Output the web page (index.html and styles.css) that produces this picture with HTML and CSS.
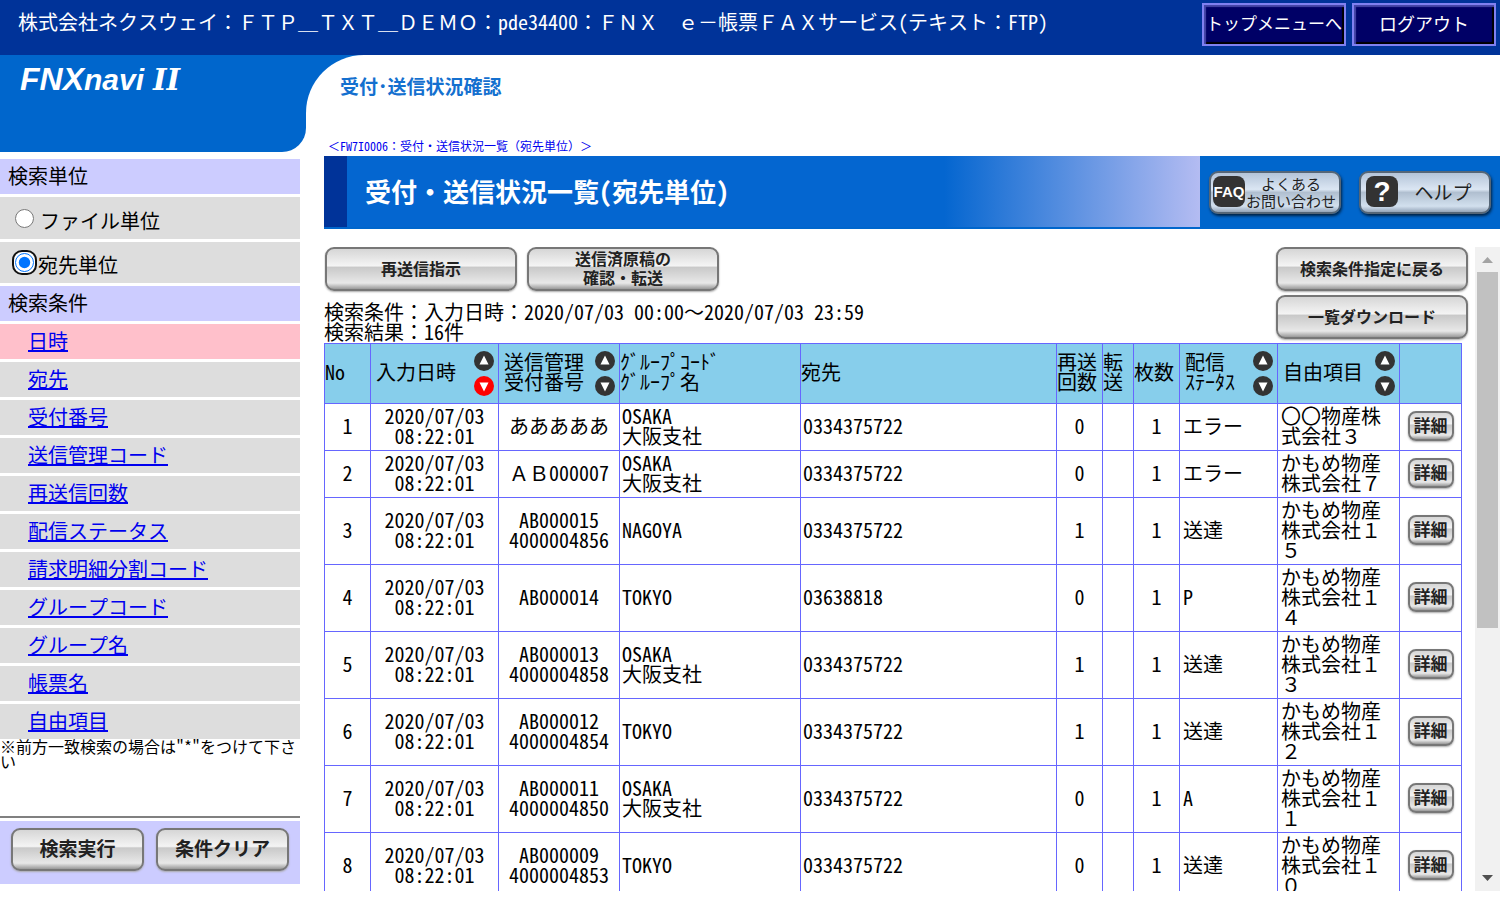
FILE: index.html
```html
<!DOCTYPE html>
<html lang="ja">
<head>
<meta charset="utf-8">
<title>受付・送信状況一覧</title>
<link rel="stylesheet" href="styles.css">
</head>
<body>
<svg class="defs" width="0" height="0" aria-hidden="true">
  <symbol id="up" viewBox="0 0 20 20"><circle cx="10" cy="10" r="10" fill="currentColor"/><path d="M10 4.5L14.5 13.5H5.5z" fill="#fff"/></symbol>
  <symbol id="down" viewBox="0 0 20 20"><circle cx="10" cy="10" r="10" fill="currentColor"/><path d="M10 15.5L14.5 6.5H5.5z" fill="#fff"/></symbol>
</svg>
<div class="page">
  <header class="topbar">
    <span class="company">株式会社ネクスウェイ：ＦＴＰ＿ＴＸＴ＿ＤＥＭＯ：pde34400：ＦＮＸ　ｅ－帳票ＦＡＸサービス(テキスト：FTP)</span>
    <nav class="topnav">
      <button class="navy">トップメニューへ</button>
      <button class="navy navy-wide">ログアウト</button>
    </nav>
  </header>
  <div class="frames">
    <aside class="side">
      <div class="brand"><span class="fnx">FNX</span><span class="navi">navi</span><span class="two">II</span></div>
      <h2 class="bar">検索単位</h2>
      <label class="choice"><input type="radio" name="unit"><span>ファイル単位</span></label>
      <label class="choice chosen"><span class="ring"><input type="radio" name="unit" checked></span><span>宛先単位</span></label>
      <h2 class="bar">検索条件</h2>
      <ul class="menu">
        <li class="current"><a href="#">日時</a></li>
        <li><a href="#">宛先</a></li>
        <li><a href="#">受付番号</a></li>
        <li><a href="#">送信管理コード</a></li>
        <li><a href="#">再送信回数</a></li>
        <li><a href="#">配信ステータス</a></li>
        <li><a href="#">請求明細分割コード</a></li>
        <li><a href="#">グループコード</a></li>
        <li><a href="#">グループ名</a></li>
        <li><a href="#">帳票名</a></li>
        <li><a href="#">自由項目</a></li>
      </ul>
      <p class="note">※前方一致検索の場合は"*"をつけて下さい</p>
      <div class="actions">
        <button class="silver large">検索実行</button>
        <button class="silver large">条件クリア</button>
      </div>
    </aside>
    <main class="main">
      <div class="corner"><h1 class="section">受付･送信状況確認</h1></div>
      <div class="content">
        <p class="code">＜FW7I0006：受付・送信状況一覧（宛先単位）＞</p>
        <div class="titlebar">
          <h2 class="title">受付・送信状況一覧(宛先単位)</h2>
          <div class="help">
            <button class="silver blue faq"><b class="tag">FAQ</b><span>よくある<br>お問い合わせ</span></button>
            <button class="silver blue"><b class="tag mark">?</b><span class="helptext">ヘルプ</span></button>
          </div>
        </div>
        <div class="viewport">
          <div class="sheet">
            <div class="tools">
              <div class="left">
                <div class="pair">
                  <button class="silver">再送信指示</button>
                  <button class="silver">送信済原稿の<br>確認・転送</button>
                </div>
                <p class="summary">検索条件：入力日時：2020/07/03 00:00～2020/07/03 23:59<br>検索結果：16件</p>
              </div>
              <div class="right">
                <button class="silver">検索条件指定に戻る</button>
                <button class="silver">一覧ダウンロード</button>
              </div>
            </div>
            <table class="list">
              <colgroup><col class="c46"><col class="c128"><col class="c121"><col class="c181"><col><col class="c46"><col class="c31"><col class="c46"><col class="c98"><col class="c122"><col class="c62"></colgroup>
              <thead>
                <tr>
                  <th>No</th>
                  <th><div class="sort"><span>入力日時</span><span class="arrows"><svg><use href="#up"/></svg><svg class="red"><use href="#down"/></svg></span></div></th>
                  <th><div class="sort"><span>送信管理<br>受付番号</span><span class="arrows"><svg><use href="#up"/></svg><svg><use href="#down"/></svg></span></div></th>
                  <th>ｸﾞﾙｰﾌﾟｺｰﾄﾞ<br>ｸﾞﾙｰﾌﾟ名</th>
                  <th>宛先</th>
                  <th>再送<br>回数</th>
                  <th>転<br>送</th>
                  <th>枚数</th>
                  <th><div class="sort"><span>配信<br>ｽﾃｰﾀｽ</span><span class="arrows"><svg><use href="#up"/></svg><svg><use href="#down"/></svg></span></div></th>
                  <th><div class="sort"><span>自由項目</span><span class="arrows"><svg><use href="#up"/></svg><svg><use href="#down"/></svg></span></div></th>
                  <th></th>
                </tr>
              </thead>
              <tbody>
                <tr><td class="mid">1</td><td class="mid">2020/07/03<br>08:22:01</td><td class="mid">あああああ</td><td>OSAKA<br>大阪支社</td><td>0334375722</td><td class="mid">0</td><td></td><td class="mid">1</td><td>エラー</td><td>〇〇物産株式会社３</td><td class="mid"><button class="silver small">詳細</button></td></tr>
                <tr><td class="mid">2</td><td class="mid">2020/07/03<br>08:22:01</td><td class="mid">ＡＢ000007</td><td>OSAKA<br>大阪支社</td><td>0334375722</td><td class="mid">0</td><td></td><td class="mid">1</td><td>エラー</td><td>かもめ物産株式会社７</td><td class="mid"><button class="silver small">詳細</button></td></tr>
                <tr><td class="mid">3</td><td class="mid">2020/07/03<br>08:22:01</td><td class="mid">AB000015<br>4000004856</td><td>NAGOYA</td><td>0334375722</td><td class="mid">1</td><td></td><td class="mid">1</td><td>送達</td><td>かもめ物産株式会社１５</td><td class="mid"><button class="silver small">詳細</button></td></tr>
                <tr><td class="mid">4</td><td class="mid">2020/07/03<br>08:22:01</td><td class="mid">AB000014</td><td>TOKYO</td><td>03638818</td><td class="mid">0</td><td></td><td class="mid">1</td><td>P</td><td>かもめ物産株式会社１４</td><td class="mid"><button class="silver small">詳細</button></td></tr>
                <tr><td class="mid">5</td><td class="mid">2020/07/03<br>08:22:01</td><td class="mid">AB000013<br>4000004858</td><td>OSAKA<br>大阪支社</td><td>0334375722</td><td class="mid">1</td><td></td><td class="mid">1</td><td>送達</td><td>かもめ物産株式会社１３</td><td class="mid"><button class="silver small">詳細</button></td></tr>
                <tr><td class="mid">6</td><td class="mid">2020/07/03<br>08:22:01</td><td class="mid">AB000012<br>4000004854</td><td>TOKYO</td><td>0334375722</td><td class="mid">1</td><td></td><td class="mid">1</td><td>送達</td><td>かもめ物産株式会社１２</td><td class="mid"><button class="silver small">詳細</button></td></tr>
                <tr><td class="mid">7</td><td class="mid">2020/07/03<br>08:22:01</td><td class="mid">AB000011<br>4000004850</td><td>OSAKA<br>大阪支社</td><td>0334375722</td><td class="mid">0</td><td></td><td class="mid">1</td><td>A</td><td>かもめ物産株式会社１１</td><td class="mid"><button class="silver small">詳細</button></td></tr>
                <tr><td class="mid">8</td><td class="mid">2020/07/03<br>08:22:01</td><td class="mid">AB000009<br>4000004853</td><td>TOKYO</td><td>0334375722</td><td class="mid">0</td><td></td><td class="mid">1</td><td>送達</td><td>かもめ物産株式会社１０</td><td class="mid"><button class="silver small">詳細</button></td></tr>
              </tbody>
            </table>
          </div>
          <div class="scroll" aria-hidden="true">
            <svg class="cap" viewBox="0 0 25 25"><path d="M12.5 10L18 16H7z" fill="#a3a3a3"/></svg>
            <div class="track"><div class="thumb"></div></div>
            <svg class="cap" viewBox="0 0 25 25"><path d="M12.5 15L18 9H7z" fill="#505050"/></svg>
          </div>
        </div>
      </div>
    </main>
  </div>
</div>
</body>
</html>
```
FILE: styles.css
```css
* { box-sizing: border-box; }
body {
  margin: 0;
  background: #fff;
  color: #000;
  font: 300 20px/20px "Noto Sans Mono CJK JP", "Noto Sans CJK JP", monospace;
}
h1, h2, p, ul { margin: 0; padding: 0; font-weight: inherit; font-size: inherit; }
button { font-family: inherit; cursor: pointer; }
.defs { position: absolute; }
.page { display: flex; flex-direction: column; height: 100vh; padding: 0 7px 7px 0; overflow: hidden; }

.topbar { flex: none; display: flex; justify-content: space-between; height: 55px; padding: 3px 4px 0 18px; background: #003399; color: #fff; }
.company { padding-top: 9px; white-space: nowrap; }
.topnav { display: flex; gap: 6px; }
.navy {
  width: 144px; height: 43px; padding: 0 0 4px;
  border: 2px solid #8080f0; outline: 0; background: #000066; color: #fff;
  box-shadow: inset 2px 2px 1px #4646a8, inset -2px -2px 1px #000;
  font-size: 17px; font-weight: 500; white-space: nowrap; line-height: 20px;
  display: flex; align-items: center; justify-content: center;
}
.navy-wide { font-size: 18px; }

.frames { flex: 1; display: flex; min-height: 0; }
.side { flex: none; display: flex; flex-direction: column; width: 306px; padding-bottom: 7px; }
.side > * { margin-right: 6px; }
.side > .brand {
  flex: none; display: flex; align-items: baseline; height: 97px; margin: 0 0 7px; padding: 8px 0 0 20px;
  border-bottom-right-radius: 24px; background: #0066cc; color: #fff;
  font: italic bold 32px/32px "Liberation Sans", sans-serif;
}
.navi { font-size: 30px; }
.two { margin-left: 9px; font-family: "DejaVu Serif", serif; font-size: 29px; }
.bar { flex: none; height: 35px; padding: 7px 8px; margin-bottom: 3px; background: #ccccff; }
.choice { flex: none; display: flex; align-items: center; gap: 6px; height: 42px; margin-bottom: 3px; padding: 6px 0 0 15px; background: #dddddd; }
.choice input { display: block; width: 19px; height: 19px; margin: 0 0 6px; }
.chosen { gap: 1px; height: 41px; padding: 5px 0 0 12px; }
.ring { margin-bottom: 6px; border: 2px solid #111; border-radius: 10px; padding: 1px; background: #fff; }
.ring input { margin: 0; }
.menu { list-style: none; display: flex; flex-direction: column; gap: 3px; }
.menu li { height: 35px; padding: 7px 28px; background: #dddddd; }
.menu .current { background: #ffc0cb; }
.menu a { color: #0000ee; text-decoration-thickness: 2px; text-underline-offset: 1px; }
.note { font-size: 16px; line-height: 15px; }
.actions { flex: none; display: flex; gap: 12px; height: 68px; margin-top: auto; padding: 10px 11px; border-top: 2px solid #808080; background: linear-gradient(#fff 3px, #ccccff 3px); }

.silver {
  display: flex; align-items: center; justify-content: center; width: 192px; height: 44px; padding: 0 0 2px;
  border: 2px solid #777; border-radius: 9px; color: #222;
  background: linear-gradient(#d6d6d6, #f4f4f4 42%, #c9c9c9 46%, #e8e8e8 85%, #999);
  box-shadow: 0 1px 2px #aaa; font-size: 16px; font-weight: 700; line-height: 19px; white-space: nowrap;
}
.large { width: 133px; height: 43px; padding-bottom: 4px; font-size: 19px; }
.small { display: inline-flex; width: 46px; height: 30px; padding: 0 0 3px; border-radius: 8px; font-size: 17px; vertical-align: middle; }

.main { flex: 1; display: flex; flex-direction: column; min-width: 0; }
.corner { flex: none; height: 82px; background: linear-gradient(#0066cc, #0066cc) 0 0 / 60px 60px no-repeat; }
.section { height: 82px; padding: 21px 34px; border-top-left-radius: 58px; background: #fff; color: #1470cf; font-size: 19px; font-weight: 700; }
.content { flex: 1; display: flex; flex-direction: column; min-height: 0; padding-left: 18px; }
.code { flex: none; height: 19px; padding: 2px 4px; color: #0000ee; font-size: 12px; line-height: 14px; }
.titlebar { flex: none; display: flex; height: 73px; margin-bottom: 18px; background: #0066cc; }
.title {
  flex: 1; height: 71px; padding: 20px 18px; border-left: 23px solid #003399;
  background: linear-gradient(90deg, #0466d0 70%, #b4bcf2); color: #fff; font-size: 26px; font-weight: 700; line-height: 30px; white-space: nowrap;
}
.help { display: flex; align-items: flex-start; gap: 18px; width: 300px; padding: 15px 9px; }
.blue { width: 132px; height: 43px; padding: 0 2px 2px; border-color: #567; background: linear-gradient(#b4c4d8, #dbe6f3 42%, #b0bfd0 50%, #d2e0ee 85%, #94a4b8); box-shadow: 1px 2px 3px #024; font-size: 15px; font-weight: 500; line-height: 17px; gap: 1px; justify-content: flex-start; }
.tag { flex: none; width: 32px; height: 31px; border-radius: 8px; background: #333; color: #fff; font: bold 15px/31px "Liberation Sans", sans-serif; text-align: center; }
.mark { font-size: 28px; margin-left: 3px; }
.helptext { flex: 1; font-size: 19px; }

.viewport { flex: 1; display: flex; min-height: 0; }
.sheet { flex: 1; min-width: 0; padding-right: 13px; overflow: hidden; }
.tools { display: flex; justify-content: space-between; height: 96px; }
.pair { display: flex; gap: 10px; padding-left: 1px; margin-bottom: 11px; }
.right { display: flex; flex-direction: column; gap: 4px; margin-right: -6px; }
.list { width: 100%; table-layout: fixed; border-collapse: collapse; }
.list th, .list td { padding: 2px 2px 4px; border: 1px solid #6666ff; text-align: left; font-weight: inherit; }
.list th { height: 60px; padding: 0 0 3px; background: #87ceeb; }
.list .mid { text-align: center; padding: 2px 0 4px; }
.list td:nth-child(9), .list td:nth-child(10) { padding-left: 3px; }
.c46 { width: 46px; } .c128 { width: 128px; } .c121 { width: 121px; } .c181 { width: 181px; }
.c31 { width: 31px; } .c98 { width: 98px; } .c122 { width: 122px; } .c62 { width: 62px; }
.sort { display: flex; align-items: center; justify-content: space-between; padding: 0 4px 0 5px; }
.arrows { display: flex; flex-direction: column; gap: 5px; padding-top: 2px; color: #333; }
.arrows svg { display: block; width: 20px; height: 20px; }
.arrows .red { color: #ff0000; }

.scroll { flex: none; display: flex; flex-direction: column; width: 25px; background: #f1f1f1; }
.cap { flex: none; width: 25px; height: 25px; }
.track { flex: 1; padding: 0 2px; }
.thumb { height: 60%; background: #c1c1c1; }
```
